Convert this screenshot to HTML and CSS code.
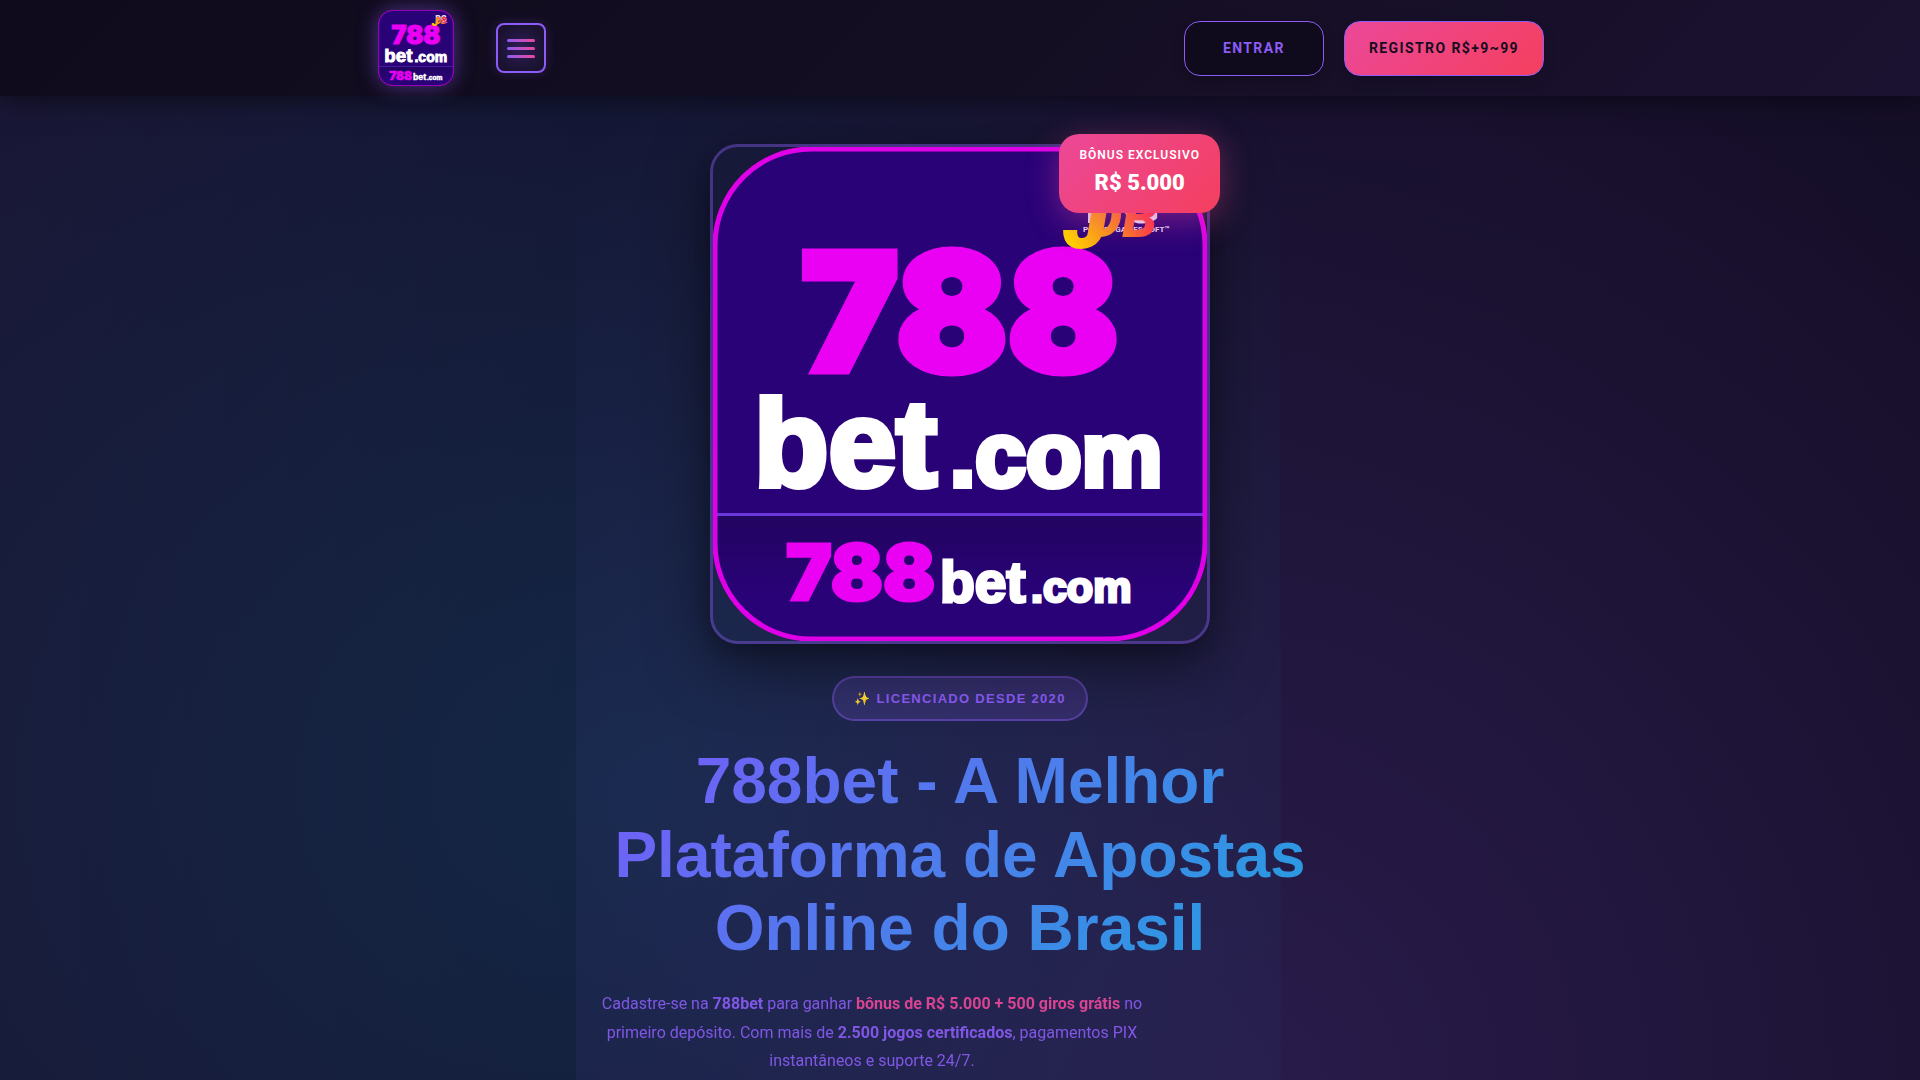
FILE: index.html
```html
<!doctype html>
<html lang="pt-BR">
  <head>
    <meta charset="utf-8">
    <meta name="viewport" content="width=device-width, initial-scale=1">
    <title>788bet - A Melhor Plataforma de Apostas Online do Brasil</title>
    <link rel="stylesheet" href="styles.css">
  </head>
  <body>
    <svg class="defs" aria-hidden="true">
      <defs>
        <linearGradient id="jdb-fill" gradientUnits="userSpaceOnUse" x1="350" y1="100" x2="440" y2="60">
          <stop offset="0.1" stop-color="#ffd000"/>
          <stop offset="0.55" stop-color="#f98a1c"/>
          <stop offset="0.95" stop-color="#ff3048"/>
        </linearGradient>
        <linearGradient id="band-fill" x1="0" y1="0" x2="0" y2="1">
          <stop offset="0" stop-color="#220460"/>
          <stop offset="0.6" stop-color="#290277"/>
        </linearGradient>
        <clipPath id="logo-clip">
          <rect x="2" y="2" width="490" height="490" rx="96"/>
        </clipPath>
      </defs>
      <symbol id="logo" viewBox="0 0 494 494">
        <g clip-path="url(#logo-clip)">
          <rect width="494" height="494" fill="#290277"/>
          <rect y="368" width="494" height="126" fill="url(#band-fill)"/>
          <rect y="366" width="494" height="3" fill="#6b38dc"/>
        </g>
        <rect x="2" y="2" width="490" height="490" rx="96" fill="none" stroke="#e000e8" stroke-width="5"/>
        <g class="logo-text">
          <text class="digits" x="88" y="224" font-size="164">788</text>
          <text class="word" x="41" y="339" font-size="122">bet</text>
          <text class="word" x="237" y="339" font-size="91">.com</text>
          <text class="digits small" x="73" y="453" font-size="77">788</text>
          <text class="word small" x="227" y="455" font-size="57">bet</text>
          <text class="word small" x="318" y="455" font-size="43">.com</text>
          <text class="pg" x="372" y="76" font-size="56">PG</text>
          <text class="pg-sub" x="370" y="85" font-size="8">POCKET GAMES SOFT™</text>
          <text class="jdb" x="350" y="101" font-size="84">J</text>
          <text class="jdb" x="374" y="90" font-size="56">DB</text>
        </g>
      </symbol>
    </svg>

    <header class="header">
      <div class="header-inner">
        <div class="header-left">
          <a class="logo" href="#" aria-label="788bet">
            <svg><use href="#logo"/></svg>
          </a>
          <button class="menu-toggle" type="button" aria-label="Menu">
            <span></span>
            <span></span>
            <span></span>
          </button>
        </div>
        <div class="header-actions">
          <button class="btn btn-login" type="button">ENTRAR</button>
          <button class="btn btn-register" type="button">REGISTRO R$+9~99</button>
        </div>
      </div>
    </header>

    <main class="hero">
      <div class="hero-content">
        <div class="hero-card">
          <svg role="img" aria-label="788bet.com"><use href="#logo"/></svg>
          <div class="bonus">
            <span class="bonus-label">BÔNUS EXCLUSIVO</span>
            <span class="bonus-value">R$ 5.000</span>
          </div>
        </div>
        <div class="badge">✨ LICENCIADO DESDE 2020</div>
        <h1>788bet - A Melhor Plataforma de Apostas Online do Brasil</h1>
        <p class="lead">Cadastre-se na <strong>788bet</strong> para ganhar <strong class="highlight">bônus de R$ 5.000 + 500 giros grátis</strong> no primeiro depósito. Com mais de <strong>2.500 jogos certificados</strong>, pagamentos PIX instantâneos e suporte 24/7.</p>
      </div>
    </main>
  </body>
</html>
```

FILE: styles.css
```css
:root {
  --violet: #8b5cf6;
  --pink: #ec4899;
  --rose: #f43f5e;
}

* {
  box-sizing: border-box;
}

body {
  margin: 0;
  min-height: 100vh;
  display: flex;
  flex-direction: column;
  background: #140f25;
  color: var(--violet);
  font-family: Roboto, "Liberation Sans", sans-serif;
  font-size: 16px;
}

.defs {
  position: absolute;
  width: 0;
  height: 0;
}

/* header */
.header {
  position: relative;
  z-index: 2;
  background: linear-gradient(135deg, #0f0a1c 0%, #140e22 50%, #1b1231 100%);
  box-shadow: 0 4px 24px rgba(0, 0, 0, 0.5);
}

.header-inner {
  max-width: 1200px;
  height: 96px;
  margin: 0 auto;
  padding: 0 16px 0 18px;
  display: flex;
  align-items: center;
  justify-content: space-between;
}

.header-left {
  display: flex;
  align-items: center;
  gap: 42px;
}

.logo {
  display: block;
  width: 76px;
  height: 76px;
  border-radius: 16px;
  box-shadow: 0 0 20px rgba(139, 92, 246, 0.5);
}

.logo svg {
  display: block;
  width: 100%;
  height: 100%;
}

.logo-text {
  font-family: Roboto, sans-serif;
  font-weight: 900;
}

.digits {
  font-family: Inter, sans-serif;
  fill: #ea00f2;
  stroke: #ea00f2;
  stroke-width: 7px;
}

.word {
  font-family: "Liberation Sans", sans-serif;
  fill: #fff;
  stroke: #fff;
  stroke-width: 6px;
}

.small {
  stroke-width: 3px;
}

.pg,
.pg-sub {
  fill: #e8dcf8;
}

.pg-sub {
  font-weight: 700;
}

.jdb {
  font-style: italic;
  fill: url(#jdb-fill);
}

.menu-toggle {
  width: 50px;
  height: 50px;
  padding: 0;
  display: flex;
  flex-direction: column;
  align-items: center;
  justify-content: center;
  gap: 5px;
  border: 2px solid var(--violet);
  border-radius: 8px;
  background: radial-gradient(circle, #2c1e55 0%, #1a1230 75%);
  box-shadow: 0 0 12px rgba(139, 92, 246, 0.2);
}

.menu-toggle span {
  width: 28px;
  height: 3px;
  border-radius: 2px;
  background: linear-gradient(90deg, var(--violet), var(--pink));
}

.header-actions {
  display: flex;
  gap: 20px;
}

.btn {
  min-width: 140px;
  height: 55px;
  padding: 0 24px;
  border: 1px solid var(--violet);
  border-radius: 16px;
  font: 700 14px Roboto, sans-serif;
  letter-spacing: 0.1em;
  box-shadow: 0 4px 12px rgba(0, 0, 0, 0.2);
}

.btn-login {
  background: #0f0a1c;
  color: var(--violet);
}

.btn-register {
  background: linear-gradient(135deg, var(--pink), var(--rose));
  color: #140c20;
}

/* hero: two overlapping glows over the base tint */
.hero {
  flex: 1;
  padding: 48px 16px 16px;
  background:
    radial-gradient(1150px 1150px at 50% 984px, rgba(139, 92, 246, 0.16), transparent) right top / 70% 100% no-repeat,
    radial-gradient(920px 920px at 50% 689px, rgba(6, 182, 212, 0.13), transparent) left top / 66.7% 100% no-repeat,
    linear-gradient(90deg, #191736 0%, #151230 30%, #160f2a 67%, #150e27 100%);
}

.hero-content {
  max-width: 776px;
  margin: 0 auto;
  display: flex;
  flex-direction: column;
  align-items: center;
}

.hero-card {
  position: relative;
  width: 500px;
  max-width: 100%;
  aspect-ratio: 1;
  border: 3px solid rgba(139, 92, 246, 0.4);
  border-radius: 28px;
  box-shadow: 0 20px 60px rgba(0, 0, 0, 0.5), 0 8px 16px rgba(0, 0, 0, 0.15);
}

.hero-card svg {
  display: block;
  width: 100%;
  height: 100%;
}

.bonus {
  position: absolute;
  top: -13px;
  right: -13px;
  padding: 12px 20px;
  display: flex;
  flex-direction: column;
  align-items: center;
  border-radius: 20px;
  background: linear-gradient(135deg, var(--pink), var(--rose));
  box-shadow: 0 8px 32px rgba(236, 72, 153, 0.4);
  color: #fff;
}

.bonus-label {
  font-size: 12px;
  font-weight: 600;
  line-height: 18px;
  letter-spacing: 1px;
}

.bonus-value {
  font-size: 22px;
  font-weight: 900;
  line-height: 37px;
}

.badge {
  margin-top: 32px;
  height: 45px;
  padding: 0 20px;
  display: flex;
  align-items: center;
  border: 2px solid rgba(139, 92, 246, 0.4);
  border-radius: 24px;
  background: rgba(139, 92, 246, 0.18);
  font-family: "Liberation Sans", sans-serif;
  font-size: 13px;
  font-weight: 700;
  letter-spacing: 0.1em;
}

h1 {
  width: 100%;
  margin: 24px 0;
  background: linear-gradient(135deg, #7a58fa, #1ea4dd);
  -webkit-background-clip: text;
  background-clip: text;
  color: transparent;
  font-family: "Liberation Sans", sans-serif;
  font-size: 64px;
  font-weight: 700;
  line-height: 1.15;
  text-align: center;
}

.lead {
  align-self: flex-start;
  max-width: 600px;
  margin: 0;
  padding: 0 24px;
  line-height: 1.8;
  text-align: center;
  opacity: 0.9;
}

.highlight {
  color: var(--pink);
}
```
